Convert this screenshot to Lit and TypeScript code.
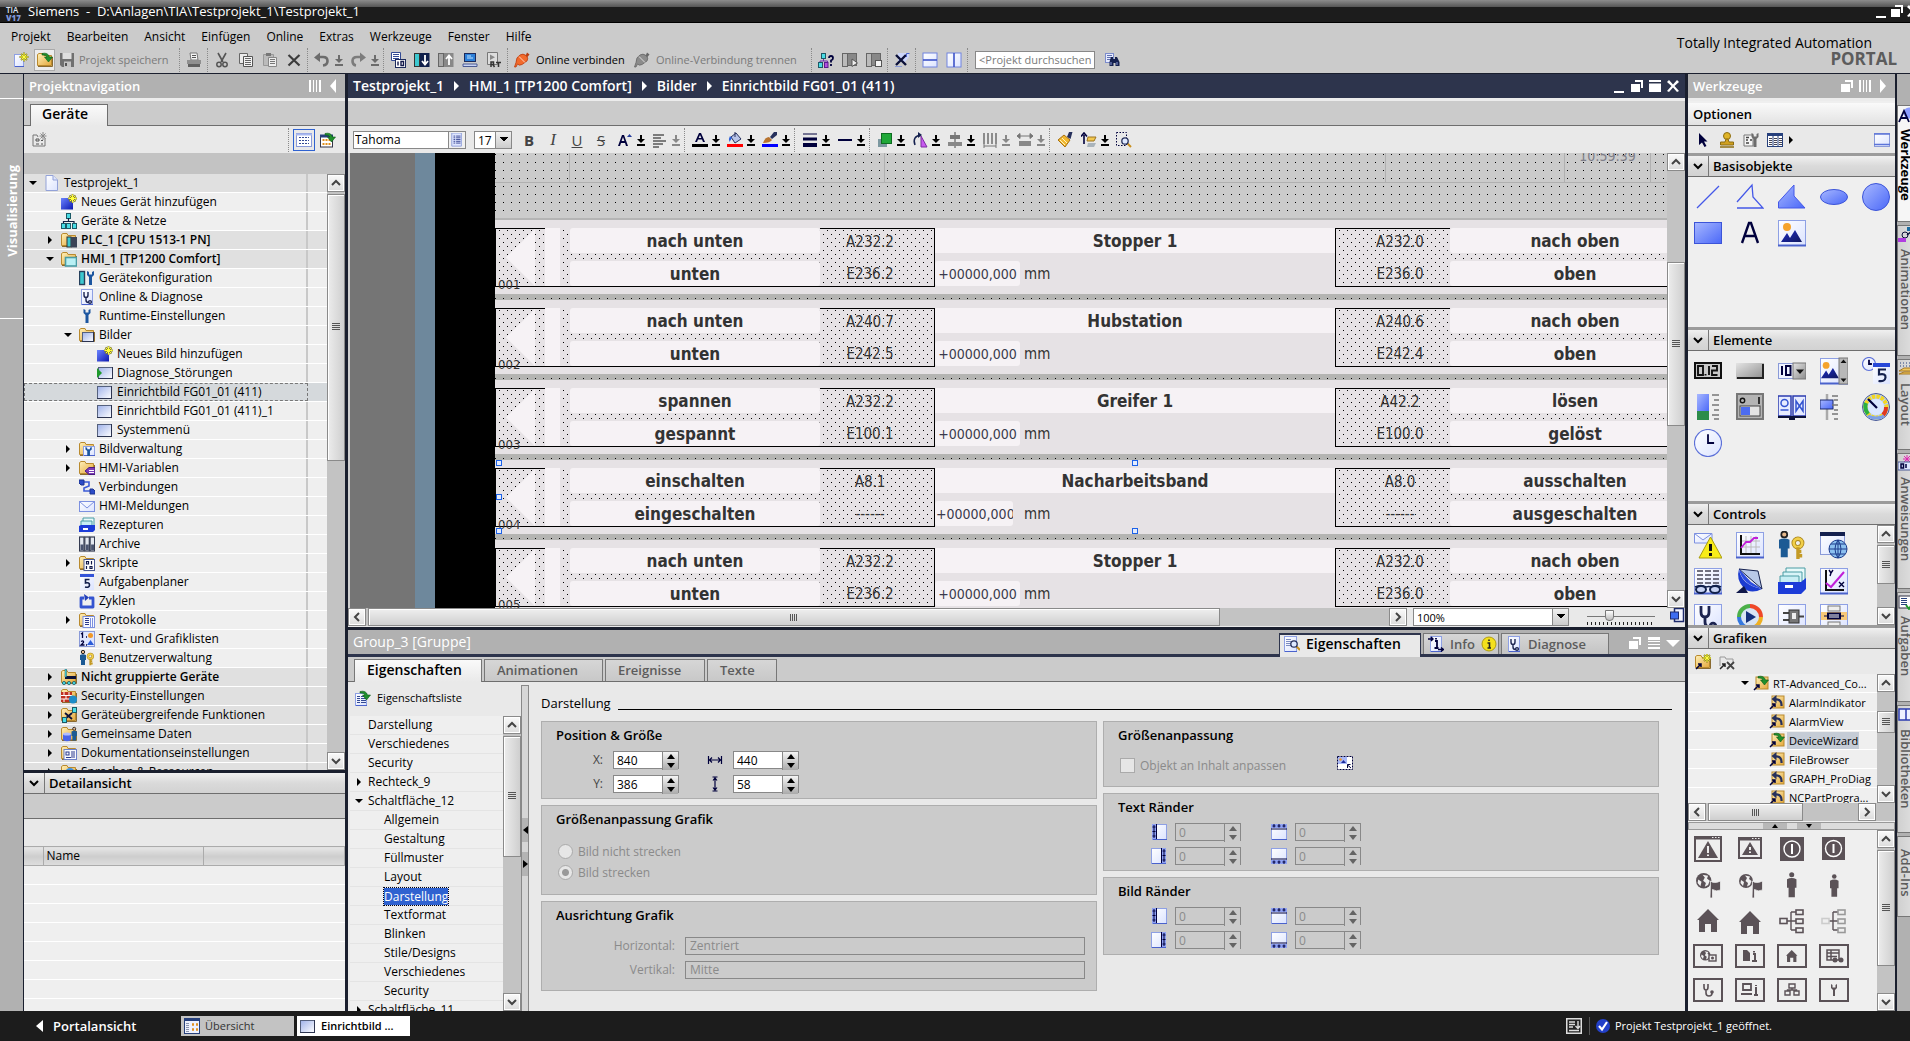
import { LitElement, html, svg, css, nothing } from "lit";
import { customElement } from "lit/decorators.js";
import { classMap } from "lit/directives/class-map.js";
import { styleMap } from "lit/directives/style-map.js";

/* ---------- shared icon parts ---------- */
const star = (x: number, y: number) => svg`<g transform="translate(${x} ${y})"><path d="M0-4.500V4.500M-4.500 0H4.500M-3-3L3 3M3-3L-3 3" stroke="#8a8420" stroke-width="1.800"/><path d="M0-4V4M-4 0H4M-2.500-2.500L2.500 2.500M2.500-2.500L-2.500 2.500" stroke="#ffff3c" stroke-width="1"/></g>`;
const folder = svg`<path d="M.5 13.500V2.500L2 1.500H6L7 3.500H14.500V13.500Z" fill="url(#gf)" stroke="#b98a2e"/><path d="M1 14.500H15.500V5" fill="none" stroke="#8a6a30"/>`;
const page = (x: number, y: number, w: number, h: number) => svg`<rect x=${x + 0.5} y=${y + 0.5} width=${w - 1} height=${h - 1} fill="url(#gp)" stroke="#8ea0e4"/><path d="M${x + 1} ${y + h - 0.5}H${x + w}" stroke="#4a62cc"/>`;
const pic = (x: number, y: number, w: number, h: number) => svg`<rect x=${x + 0.5} y=${y + 0.5} width=${w - 1} height=${h - 1} fill="url(#gq)" stroke="#55617e"/><path d="M${x} ${y + h - 0.5}H${x + w}M${x + w - 0.5} ${y}V${y + h}" stroke="#2c3450"/>`;
const wrench = (x: number, y: number, c: string) => svg`<path transform="translate(${x} ${y})" d="M0 0V4L2 6V14H5V6L7 4V0L5 1V3.500H2V1Z" fill=${c}/>`;
const person = (x: number, y: number, s: number, c: string) => svg`<g transform="translate(${x} ${y}) scale(${s})"><circle cx="3" cy="2" r="1.700" fill="#e8b98c" stroke="#222"/><path d="M0 5Q3 3.500 6 5V10H5V15H1V10H0Z" fill=${c}/></g>`;
const key = (x: number, y: number, s: number) => svg`<g transform="translate(${x} ${y}) scale(${s})"><circle cx="3.500" cy="3.500" r="2.500" fill="none" stroke="#a8841c" stroke-width="2.600"/><circle cx="3.500" cy="3.500" r="2.500" fill="none" stroke="#f1cf4a" stroke-width="1.600"/><path d="M3.500 6V13M3.500 11H6M3.500 8.500H5.500" stroke="#c49a24" stroke-width="2"/></g>`;
const steth = (x: number, y: number, s: number) => svg`<g transform="translate(${x} ${y}) scale(${s})" fill="none" stroke="#1c2450" stroke-width="1.400"><path d="M1 0V3Q1 5.500 3 5.500T5 3V0M3 5.500V8Q3 10.500 5.500 10.500"/><circle cx="7" cy="10" r="1.400"/></g>`;
const bino = svg`<path d="M6 8L7 5H9V7H11V5H13L15.500 10V14H11.500V11H9.500V14H5.500V10Z" fill="#14204e"/><path d="M7 10V13M13 10V13" stroke="#8a9ad8"/>`;
const magn = (x: number, y: number) => svg`<g transform="translate(${x} ${y})"><path d="M3.500 3.500L7 7" stroke="#c98f1e" stroke-width="2"/><circle cx="1" cy="1" r="3.200" fill="#dfe9ff" stroke="#26305c" stroke-width="1.300"/></g>`;
const greenArrow = svg`<path d="M5 1.500Q11 0 12.500 5H15.500L11.500 10L7.500 5H10Q9 2.500 5 3Z" fill="#1f8f2c" stroke="#0d5c18" stroke-width=".6"/>`;
const lines = (x: number, y: number, w: number, n: number, g: number, c: string) => svg`${Array.from({ length: n }, (_, i) => svg`<path d="M${x} ${y + i * g + 0.5}h${w}" stroke=${c}/>`)}`;
const plug = (a: string, b: string) => svg`<path d="M13 .5L15.500 2.500L13 5.500L11.500 4Z" fill=${b}/><path d="M6 3Q9 1 12 3.500T13 9L8 12.500Q5 14 3.500 12L2 15H.5L2 10.500Q2 5 6 3Z" fill=${a} stroke=${b} stroke-width=".8"/><path d="M5 4.500L11 10.500" stroke="#fff" stroke-opacity=".7"/>`;
const dark = "#00003c";
const cyanBox = (x: number, y: number) => svg`<rect x=${x + 0.5} y=${y + 0.5} width="4" height="5" fill="#4adce4" stroke="#1c5a66"/>`;

const I: Record<string, unknown> = {
  newp: svg`${page(1, 2, 10, 13)}${star(11, 5)}`,
  open: svg`${folder}${greenArrow}`,
  save: svg`<path d="M1 1H15V15H3L1 13Z" fill="#707070"/><rect x="3.500" y="1" width="9" height="6" fill="#dedede"/><rect x="5" y="9.500" width="7" height="5.500" fill="#c4c4c4"/><rect x="6" y="11" width="2" height="3" fill="#555"/>`,
  print: svg`<path d="M4 1H11L12 8H5Z" fill="#f4f4f4" stroke="#777"/>${lines(6, 3, 4, 2, 2, "#555")}<path d="M1 8H15V12H1Z" fill="#909090"/><path d="M2 12H14V15H2Z" fill="#606060"/>`,
  cut: svg`<path d="M4 1L9 10M12 1L7 10" stroke="#555" stroke-width="1.600"/><circle cx="5" cy="12.500" r="2.200" fill="none" stroke="#555" stroke-width="1.500"/><circle cx="11" cy="12.500" r="2.200" fill="none" stroke="#555" stroke-width="1.500"/>`,
  copy: svg`<path d="M1.500 1.500H9.500V11.500H1.500Z" fill="#ececec" stroke="#666"/><path d="M5.500 4.500H14.500V14.500H5.500Z" fill="#f4f4f4" stroke="#555"/>${lines(7, 6, 6, 4, 2, "#666")}`,
  paste: svg`<path d="M1.500 2.500H11.500V13.500H1.500Z" fill="#bbb" stroke="#999"/><path d="M4 1H9V4H4Z" fill="#777"/><path d="M6.500 5.500H14.500V14.500H6.500Z" fill="#eee" stroke="#888"/>${lines(8, 7, 5, 3, 2, "#777")}`,
  del: svg`<path d="M2.500 3L13.500 13.500M13.500 3L2.500 13.500" stroke="#3c3c3c" stroke-width="2.200"/>`,
  undo: svg`<path d="M3 5H9Q13.500 5 13.500 9T9 13.500" fill="none" stroke="#6c6c6c" stroke-width="2.600"/><path d="M0 5.500L6 .5V10Z" fill="#6c6c6c"/>`,
  redo: svg`<path d="M12 5H7Q2.500 5 2.500 9T6 13.500" fill="none" stroke="#7c7c7c" stroke-width="2.600"/><path d="M16 5.500L10 .5V10Z" fill="#7c7c7c"/>`,
  comp: svg`<path d="M1.500.5H10.500V8.500H1.500Z" fill="#fff" stroke="#334a94"/>${lines(3, 2, 6, 3, 2, "#334a94")}<rect x="5.500" y="7.500" width="10" height="8" fill="#fff" stroke="#1c2a5c"/><path d="M8 9.500V13.500M11 9.500H13.500V13.500H11Z" stroke="#10184a" fill="none" stroke-width="1.400"/>`,
  down: svg`<rect x=".5" y="1.500" width="5" height="13" fill="#3cc8d0" stroke="#333"/><rect x="6" y="1" width="9.500" height="14" fill="#10204c"/><path d="M11 3V12M8 9L11 12.500L14 9" stroke="#fff" stroke-width="1.800" fill="none"/>`,
  up: svg`<rect x=".5" y="1.500" width="5" height="13" fill="#a8a8a8" stroke="#666"/><rect x="6" y="1" width="9.500" height="14" fill="#888"/><path d="M11 13V4M8 7L11 3.500L14 7" stroke="#fff" stroke-width="1.800" fill="none"/>`,
  pc: svg`<rect x="2.500" y="1.500" width="11" height="8" fill="#2c7fd8" stroke="#1c2a5c"/><path d="M5 4H9M5 6H11" stroke="#bfe4ff"/><path d="M1 12H15V14.500H1Z" fill="#c8d4f4" stroke="#4a5a94"/>`,
  rt: svg`<path d="M1.500.5H11.500V12.500H1.500Z" fill="#ddd" stroke="#777"/><path d="M4 2.500V8L9 5.200Z" fill="#888"/><path d="M5 15V10H7.500V12.500H5M7 12.500L8.500 15M10 10.500H15M12.500 10.500V15" stroke="#333" stroke-width="1.500" fill="none"/>`,
  plug: plug("#f26a2c", "#b93c10"),
  plugoff: plug("#8c8c8c", "#666"),
  net: svg`<g transform="translate(0 1)">${cyanBox(3, 0)}<path d="M5.500 6V8M2 10V8H9.500V10" stroke="#6a2cb0" fill="none"/>${cyanBox(0, 9)}<rect x="6.500" y="9.500" width="3.500" height="5" fill="#b050e0" stroke="#5a1c8c"/></g><path d="M11 6Q11 4 13 4T15 6Q15 8 13 8.500V10.500M13 12V14" stroke="${dark}" stroke-width="1.800" fill="none"/>`,
  start: svg`<rect x=".5" y="1.500" width="5" height="13" fill="#bbb" stroke="#666"/><rect x="5.500" y="1.500" width="9" height="12" fill="#888" stroke="#666"/><path d="M10 7V14.500L15.500 11Z" fill="#eee" stroke="#555"/>`,
  stop: svg`<rect x=".5" y="1.500" width="5" height="13" fill="#bbb" stroke="#666"/><rect x="5.500" y="1.500" width="9" height="12" fill="#888" stroke="#666"/><rect x="9.500" y="8.500" width="6" height="6" fill="#f4f4f4" stroke="#555"/>`,
  xref: svg`<path d="M4 1H15V5L11 10H4Z" fill="#cdd6fa"/><path d="M2 3L12 13M12 3L2 13" stroke="#0b1038" stroke-width="2.400"/><path d="M12.500 5V1.500H15.500" stroke="#4a62cc" fill="none"/><path d="M1 14.500H8" stroke="#8a9ad8"/>`,
  splh: svg`<rect x="1" y="1" width="14" height="14" fill="url(#gp)" stroke="#7084e0"/><path d="M1 8H15" stroke="#3c52c8" stroke-width="1.600"/>`,
  splv: svg`<rect x="1" y="1" width="14" height="14" fill="url(#gp)" stroke="#7084e0"/><path d="M8 1V15" stroke="#3c52c8" stroke-width="1.600"/>`,
  find: svg`<rect x="1.500" y="1.500" width="8" height="9" fill="#e6ebff" stroke="#7c8ccc"/>${lines(3, 3, 5, 3, 2, "#6070b0")}${bino}`,
  /* format bar */
  list: svg`<path d="M2 0H13V15H2Z" fill="#dfe6ff" stroke="#8a9ad8"/>${lines(4, 3, 2, 5, 2, "#2c3a8c")}${lines(7, 3, 5, 5, 2, "#2c3a8c")}`,
  fup: svg`<path d="M1 14L5 3H7L11 14H9L8 11H4L3 14M4.600 9H7.400L6 5Z" fill="${dark}" fill-rule="evenodd"/><path d="M10 5L12.500 2L15 5Z" fill="#243c9c"/>`,
  align: svg`<path d="M1 3H12M1 6H9M1 9H14M1 12H11M1 15H7" stroke="#7c7c7c" stroke-width="2"/>`,
  fcol: svg`<path d="M3 10L7 1H9L13 10H11L10 7.500H6L5 10M6.600 6H9.400L8 3Z" fill="${dark}" fill-rule="evenodd"/><rect x="0" y="12" width="16" height="3" fill="#000"/>`,
  fill: svg`<path d="M4 5L9 1L14 7L8 11Z" fill="#b8c4e8" stroke="#26305c"/><path d="M3 4Q1 7 2.500 10L5 6Z" fill="#2c60d8"/><path d="M8 5V0" stroke="#26305c"/><rect x="0" y="12" width="16" height="3" fill="#f00"/>`,
  pen: svg`<path d="M8 5L12 0H15V3L10 7Z" fill="#26305c"/><path d="M1 11Q3 5 7 5L10 8Q8 11 1 11Z" fill="#b87430"/><rect x="0" y="12" width="16" height="3" fill="#00f"/>`,
  lwid: svg`<path d="M1 2H15" stroke="${dark}"/><path d="M1 7H15" stroke="${dark}" stroke-width="3"/><path d="M1 13H15" stroke="${dark}" stroke-width="4"/>`,
  lsty: svg`<path d="M1 8H15" stroke="${dark}" stroke-width="2"/>`,
  front: svg`<rect x="1" y="7" width="9" height="8" fill="#7c98a0"/><rect x="4.500" y="1.500" width="10" height="10" fill="#1fa838" stroke="#0d6c20"/>`,
  rot: svg`<path d="M9 15V4L15 15Z" fill="#c85af0" stroke="#7c2ca0"/><path d="M3 13Q0 5 8 3" fill="none" stroke="#14204e" stroke-width="1.500"/><path d="M6 0L10 3L6 6Z" fill="#14204e"/>`,
  alv: svg`<path d="M8 0V16" stroke="#444"/><rect x="3" y="3" width="10" height="4" fill="#777"/><rect x="1" y="10" width="14" height="4" fill="#888"/>`,
  dist: svg`<path d="M2 1V12M6 1V12M10 1V12M14 1V12" stroke="#8c8c8c" stroke-width="2"/><path d="M2 14H14M2 12V16M14 12V16" stroke="#777"/>`,
  same: svg`<path d="M3 4H13M3 1.500V6.500L0 4ZM13 1.500V6.500L16 4Z" stroke="#777" fill="#777"/><rect x="2" y="9" width="12" height="5" fill="#888"/>`,
  brush: svg`<path d="M10 5L12 0H15.500L13.500 7Z" fill="#26305c"/><path d="M1 8L7 3L13 8L8 15Z" fill="#f0b830" stroke="#a87010"/><path d="M3 8L8 13M5 6L10 11" stroke="#fff2c0"/>`,
  order: svg`<path d="M3 12V3M0 4.500L3 1L6 4.500" stroke="${dark}" stroke-width="1.600" fill="none"/><path d="M7 5H15L13 9H6Z" fill="#f2c850" stroke="#9c7420"/><path d="M7 11H15L13 15H6Z" fill="#aab4bc"/>`,
  zsel: svg`<rect x=".5" y=".5" width="10" height="13" fill="none" stroke="${dark}" stroke-dasharray="1.500 1.500"/>${magn(8, 8)}`,
  /* tree */
  doc: svg`<path d="M2 .5H9L13.500 5V15.500H2Z" fill="url(#gp)" stroke="#93a2d8"/><path d="M9 .5V5H13.500" fill="#dfe5fb" stroke="#93a2d8"/>`,
  newd: svg`<rect x="0" y="4" width="12" height="11.500" fill="url(#gd)"/>${star(11.5, 4.5)}`,
  netz: svg`${cyanBox(5, 0)}<path d="M7.500 5V9M2.500 10V8.500H13V10" stroke="#102040" stroke-width="1.200" fill="none"/>${cyanBox(0, 10)}${cyanBox(5, 10)}${cyanBox(11, 10)}`,
  fplc: svg`${folder}<rect x="6" y="5" width="4" height="10" fill="#3cc8d0" stroke="#333"/><rect x="10" y="5" width="6" height="10.500" fill="#3c4456"/>`,
  fhmi: svg`${folder}<rect x="4.500" y="6.500" width="11" height="8.500" fill="#b9f0f4" stroke="#4a9ca4" stroke-width="1.600"/>`,
  conf: svg`<rect x=".5" y="1.500" width="5" height="13" fill="#3cc8d0" stroke="#26405c" stroke-width="1.400"/>${wrench(8, 1, "#1c56a0")}`,
  diag: svg`${page(2, 0, 12, 16)}${steth(4, 3, 1)}`,
  wr: wrench(4.5, 1, "#1c56a0"),
  fpic: svg`${folder}${pic(3, 5, 12, 10)}`,
  spic: svg`${pic(1, 2, 15, 12)}<path d="M0 3V13L5 8Z" fill="#1f9a2c"/>`,
  pic: pic(0, 2, 15, 13),
  fmgm: svg`${folder}${page(4, 5, 12, 10)}<g transform="translate(6 6) scale(.9 .65)">${wrench(0.5, 0, "#1c56a0")}</g>`,
  fvar: svg`${folder}<path d="M6 11L10 7.500H16V14.500H10Z" fill="#7c3cb8" stroke="#4a1c80"/><path d="M10 10.500H15M10 12.500H15" stroke="#fff"/>`,
  conn: svg`<path d="M5 3H10V7L5 9V12H11" stroke="#3c5cd8" stroke-width="1.600" fill="none"/><path d="M0 1H5V6H2L0 4ZM11 10H14L16 12V15H11Z" fill="#2c4cc8" stroke="#1c3490"/>`,
  mail: svg`<rect x=".5" y="3.500" width="15" height="10" fill="url(#gp)" stroke="#7c90e0"/><path d="M.5 3.500L8 10L15.500 3.500" fill="none" stroke="#7c90e0"/>`,
  reci: svg`<path d="M4 1H15V9H4Z" fill="#e8fafa" stroke="#4a9ca4"/><path d="M2 4H13V11H2Z" fill="#c8eef4" stroke="#4a9ca4"/><path d="M0 9L2 8H16V13L14 15H0Z" fill="#1c3cd8"/><rect x="4" y="11" width="5" height="2" fill="#fff"/>`,
  arch: svg`${[0, 5.3, 10.6].map((x) => svg`<rect x=${x + 0.5} y="1" width="4.500" height="14" fill="#e4e8f0" stroke="#333a50" stroke-width="1.200"/><path d="M${x + 1.5} 8.500H${x + 4.5}V14H${x + 1.5}Z" fill="#4a5470"/>`)}`,
  fscr: svg`${folder}<rect x="5" y="4.500" width="10.500" height="11" fill="#fff" stroke="#4a5a94"/><path d="M7.500 6.500H9.500V9H7.500ZM12.500 6V9.500M7.500 11V14M11 11.500H13V13.500H11Z" stroke="#10184a" fill="none" stroke-width="1.200"/>`,
  five: svg`<rect x="1" y="0" width="14" height="16" fill="url(#gp)"/><rect x="1" y="0" width="14" height="3" fill="#3454d8"/><path d="M10.500 5.500H6.500V9Q10.500 8 10.500 11T6 13" fill="none" stroke="#14204e" stroke-width="1.600"/>`,
  cyc: svg`<path d="M5 5H2V14H14V5H10" fill="none" stroke="#3454d0" stroke-width="2.800" stroke-linejoin="round"/><path d="M5 1L10 4.500L6 8Z" fill="#2440b8"/>`,
  fprt: svg`${folder}<rect x="4" y="4.500" width="11.500" height="11" fill="#f8faff" stroke="#7c90e0"/>${lines(6, 6, 4, 4, 2, "#2c3a8c")}<path d="M11.500 6V15M13.500 6V15" stroke="#7c90e0"/>`,
  txtl: svg`<rect x=".5" y=".5" width="15" height="15" fill="#dfe6ff" stroke="#8a9ad8"/><path d="M2 3L3.500 2V7M2 10.500Q5 9 4.500 11.500L2 14H5.500M7 6H8M7 14H8" stroke="${dark}" fill="none" stroke-width="1.300"/><circle cx="11.500" cy="4.500" r="2.500" fill="#f09828"/><path d="M8 14L11.500 9L15 14Z" fill="#2c5cd8"/>`,
  user: svg`${person(1, 0, 1, "#1c5a94")}${key(8, 3, 0.95)}`,
  fung: svg`${folder}<rect x="4" y="7" width="11" height="3" fill="#0b1038"/><path d="M4 0H5.500V8H4Z" fill="#4adce4" stroke="#1c5a66" stroke-width=".5"/>${[3, 8, 13].map((x) => svg`<circle cx=${x} cy="14" r="1.600" fill="#4adce4" stroke="#1c5a66" stroke-width=".8"/>`)}`,
  fsec: svg`${folder}<path d="M0 4H11V14H0Z" fill="#c03020"/><path d="M0 7.500H11M0 11H11M3 4V7.500M8 4V7.500M5 7.500V11M3 11V14" stroke="#fff"/><circle cx="12" cy="11.500" r="4" fill="#1c8cc8"/>`,
  fcro: svg`${folder}<path d="M4 6L11 12M11 6L4 12" stroke="#0b1038" stroke-width="1.800"/>${cyanBox(11, 0)}${cyanBox(1, 10)}`,
  fcom: svg`${folder}<path d="M2 8H10V14Q6 16.500 2 14Z" fill="#4a64e8"/><ellipse cx="6" cy="8" rx="4" ry="1.600" fill="#b0bcff"/>${person(10.5, 1, 0.9, "#1c5a94")}`,
  fdoc: svg`${folder}<rect x="3" y="4.500" width="12.500" height="10" fill="#f8faff" stroke="#6c80c8"/><rect x="5" y="7" width="3" height="3" fill="none" stroke="#2c3a8c"/>${lines(5, 12, 5, 1, 2, "#2c3a8c")}<path d="M11 6V13M13 6V13" stroke="#2c3a8c"/>`,
  fglo: svg`${folder}<circle cx="9" cy="9" r="5" fill="#3c90e0"/>`,
  over: svg`<rect x=".5" y=".5" width="15" height="15" fill="#eef2ff" stroke="#26407c"/><rect x="0" y="0" width="16" height="3" fill="#26407c"/>${lines(2, 5, 3, 5, 2, "#8a94b0")}<path d="M8 6.500H10M12 6.500H14M8 11.500H10M12 11.500H14" stroke="#e09020" stroke-width="2.500"/>`,
  tbl: svg`<rect x=".5" y="1.500" width="15" height="13" fill="#fff" stroke="#8a9ad8"/>${[5, 8, 11].map((y) => svg`<path d="M3 ${y + 0.5}H13" stroke="#334a94" stroke-dasharray="2 1"/>`)}<path d="M0 2.500H16" stroke="#a8b8f0" stroke-width="2"/>`,
  cal: svg`<rect x=".5" y="4" width="12" height="11" fill="#fff" stroke="#334"/><rect x="0" y="2.500" width="13" height="3" fill="#26407c"/><path d="M2.500 8H4.500M5.500 8H7.500M8.500 8H10.500M2.500 12H4.500M5.500 12H7.500M8.500 12H10.500" stroke="#e09020" stroke-width="2"/>${greenArrow}`,
  nfol: svg`<path d="M1 5V14H13V6" fill="none" stroke="#777"/><path d="M1 5V3H5L6 5" fill="none" stroke="#777"/><path d="M4 7H7V9H4ZM4 12H7M9 8.500H11M9 12H11" stroke="#555" fill="none"/><path d="M11 0V8M7.500 4H14.500M8.500 1.500L13.500 6.500M13.500 1.500L8.500 6.500" stroke="#888"/>`,
  props: svg`${page(0, 3, 12, 13)}${lines(2, 6, 3, 4, 2, "#334a94")}${lines(6, 6, 5, 4, 2, "#334a94")}${greenArrow}`,
  insp: svg`${page(0, 0, 13, 16)}${lines(2, 3, 5, 4, 2, "#7c8cc0")}${magn(9, 7)}`,
  info: svg`${page(2, 0, 12, 16)}<path d="M7 5H9V12M6.500 12H10.500M8 2V3.500" stroke="${dark}" stroke-width="1.800" fill="none"/><path d="M0 3H5M3 1L5 3L3 5M10 13.500H15M13 11.500L15.500 13.500L13 15.500" stroke="${dark}" stroke-width="1.400" fill="none"/>`,
  infoy: svg`<circle cx="8" cy="8" r="7" fill="#f4e01c" stroke="#b09c10"/><path d="M8 3.500V5M6.500 7H8.500V12M6.500 12H10" stroke="#222" stroke-width="1.600" fill="none"/>`,
  wid: svg`<path d="M1.500 4V12M14.500 4V12M2 8H14M5 5.500L2.500 8L5 10.500M11 5.500L13.500 8L11 10.500" stroke="${dark}" stroke-width="1.200" fill="none"/>`,
  hei: svg`<path d="M5.500 1H10.500M5.500 15H10.500M8 1.500V14.500M6 4.500L8 2L10 4.500M6 11.500L8 14L10 11.500" stroke="${dark}" stroke-width="1.200" fill="none"/>`,
  ml: svg`${page(1, 0, 15, 16)}<rect x="1" y="0" width="4" height="15" fill="#8fa2f4"/><path d="M5.500 0V15M3 1V14M1.500 3H4.500M1.500 7.500H4.500M1.500 12H4.500" stroke="${dark}"/>`,
  mr: svg`${page(0, 0, 15, 16)}<rect x="11" y="0" width="4" height="15" fill="#8fa2f4"/><path d="M10.500 0V15M13 1V14M11.500 3H14.500M11.500 7.500H14.500M11.500 12H14.500" stroke="${dark}"/>`,
  mt: svg`${page(0, 0, 16, 16)}<rect x="0" y="0" width="16" height="4" fill="#8fa2f4"/><path d="M0 5H16M3 0V3.500M8 0V3.500M13 0V3.500M1.500 2H4.500M6.500 2H9.500M11.500 2H14.500" stroke="${dark}"/>`,
  mb: svg`${page(0, 0, 16, 16)}<rect x="0" y="12" width="16" height="4" fill="#8fa2f4"/><path d="M0 11H16M3 12.500V16M8 12.500V16M13 12.500V16M1.500 14H4.500M6.500 14H9.500M11.500 14H14.500" stroke="${dark}"/>`,
  fit: svg`<rect x=".5" y="1.500" width="15" height="13" fill="#fff" stroke="${dark}" stroke-dasharray="2 1"/><rect x="1" y="2" width="9" height="7" fill="#a8b8f8"/><circle cx="3.500" cy="4.500" r="1.300" fill="#f09828"/><path d="M4 8L6.500 5L9 8Z" fill="#1c2a9c"/><path d="M14 13L10.500 10M10.500 13V9.500H13.500" stroke="${dark}" fill="none"/>`,
  ptr: svg`<path d="M4 1L4 13L7 10.500L9.500 15L11.500 14L9 9.500H12.500Z" fill="${dark}"/>`,
  stamp: svg`<circle cx="8" cy="4" r="3.500" fill="#e0b428" stroke="#8c6c10"/><path d="M7 7H9L10 10H14.500V13H1.500V10H6Z" fill="#d0a020" stroke="#8c6c10"/><path d="M1 15H15" stroke="#8c6c10" stroke-width="1.500"/>`,
  optw: svg`<path d="M1 3H10V14H1Z" fill="#f4f4f4" stroke="#777"/><path d="M3 5.500H6M3 8H5M7 8H9M3 11H6" stroke="#444" stroke-width="1.600"/>${wrench(8.5, 1, "#6c6c6c")}`,
  cols: svg`<rect x=".5" y="1.500" width="15" height="13" fill="#fff" stroke="#26407c"/><rect x="0" y="1" width="16" height="3" fill="#26407c"/><path d="M6 4V14M11 4V14" stroke="#26407c"/>${lines(2, 6, 3, 4, 2, "#445")}${lines(7, 6, 3, 4, 2, "#445")}${lines(12, 6, 3, 4, 2, "#445")}`,
  pane: svg`<rect x=".5" y="1.500" width="15" height="13" fill="url(#gp)" stroke="#8a9ad8"/><path d="M0 2H16M0 12.500H16" stroke="#5c74d8" stroke-width="1.600"/>`,
  lfol: svg`${folder}${star(12, 4)}<path d="M1 15L6 10M3 10H6V13" stroke="${dark}" stroke-width="1.500" fill="none"/>`,
  dfol: svg`<path d="M1 12V3H6L7 5H14V8" fill="none" stroke="#999"/><path d="M1 15L6 10M3 10H6V13" stroke="#222" stroke-width="1.500" fill="none"/><path d="M8 8L15 15M15 8L8 15" stroke="#444" stroke-width="1.800"/>`,
  gfol: svg`<rect x="3" y="2" width="12" height="12" fill="url(#gf)" stroke="#b98a2e"/>${greenArrow}<path d="M1 15L6 10M3 10H6V13" stroke="${dark}" stroke-width="1.500" fill="none"/>`,
  bfol: svg`<rect x="3" y="2" width="12" height="12" fill="url(#gf)" stroke="#b98a2e"/><path d="M12.500 12Q13 5 6 5.500" stroke="#26305c" stroke-width="2.200" fill="none"/><path d="M7.500 1V9.500L2.500 5Z" fill="#26305c"/><path d="M1 15L6 10M3 10H6V13" stroke="${dark}" stroke-width="1.500" fill="none"/>`,
  /* tab strip */
  tobj: svg`<circle cx="11" cy="6" r="5.500" fill="#8c9cff"/><path d="M1 15L6 4L11 15M3 11H9" stroke="${dark}" stroke-width="1.800" fill="none"/>`,
  tani: svg`<rect x="9" y="0" width="7" height="4" fill="#1c6ca0"/><circle cx="7" cy="8" r="3" fill="none" stroke="#0b1038"/><path d="M9 8L14 4" stroke="#0b1038" stroke-width="1.500"/><rect x="0" y="11" width="8" height="4" fill="#b03ce0"/>`,
  tlay: svg`<path d="M2 2H16M2 5H16" stroke="#26407c" stroke-dasharray="1 2"/><path d="M1 10L6 7H16L12 10ZM1 13L6 11H16L12 13Z" fill="#f0c860" stroke="#a87820"/>`,
  tanw: svg`<path d="M9 0V8M5 4H13M6 1L12 7M12 1L6 7" stroke="#e028b0"/><rect x="0" y="7" width="16" height="8" fill="#dfe6ff" stroke="#4a5a94"/><path d="M3 9H5.500V13H3ZM8 9V13" stroke="${dark}" fill="none" stroke-width="1.500"/>`,
  tauf: svg`<rect x="1" y="2" width="13" height="12" fill="#fff" stroke="#334"/>${lines(3, 4, 6, 4, 2, "#26407c")}<path d="M8 11L11 15L16 7" stroke="#1f9a2c" stroke-width="2" fill="none"/>`,
  tbib: svg`<path d="M1 2H8V13H1ZM8 2H15V13H8Z" fill="#eef2ff" stroke="#2c3cb0" stroke-width="1.500"/>`,
  okblue: svg`<rect x="1" y="1" width="14" height="14" rx="7" fill="#2340c8"/><path d="M4 8L7 11.500L12 4" stroke="#fff" stroke-width="2.200" fill="none"/>`,
  dock: svg`<path d="M.75.75H15.250V15.250H.75Z" fill="#222" stroke="#ddd" stroke-width="1.500"/><path d="M3 4H9M3 6.500H9M3 9H7M3 12.500H13" stroke="#ddd" stroke-width="1.400"/><path d="M12 3V10M9.500 8L12 10.500L14 8" stroke="#ddd" fill="none" stroke-width="1.400"/>`,
  layer: svg`<rect x="5.500" y=".5" width="9" height="13" fill="#f4f6ff" stroke="#1c2a6c" stroke-width="1.500"/><rect x="1.500" y="4" width="8" height="7" fill="#3c6cf0" stroke="#1c2a6c"/>`,
};

/* 28px palette icons */
const bframe = svg`<rect x=".5" y="1.500" width="27" height="25" fill="url(#gp)" stroke="#8ea0e4"/><path d="M0 26.500H28" stroke="#4a62cc" stroke-width="2"/>`;
const clock = (cx: number, cy: number, r: number) => svg`<circle cx=${cx} cy=${cy} r=${r} fill="url(#gp)" stroke="#5c70d8" stroke-width="1.200"/><path d="M${cx} ${cy - r * 0.65}V${cy}H${cx + r * 0.45}" fill="none" stroke="${dark}" stroke-width="1.800"/>`;
const mount = (x: number, y: number, s: number) => svg`<g transform="translate(${x} ${y}) scale(${s})"><circle cx="6" cy="4" r="4" fill="#f5a32c"/><path d="M0 19L6 10L9 15L14 7L21 19Z" fill="url(#gm)"/></g>`;
const grey = "#5b5257";
const globe = (x: number, y: number, s: number) => svg`<g transform="translate(${x} ${y}) scale(${s})"><circle cx="7" cy="7" r="7" fill=${grey}/><path d="M2 6L5 8L4 12L1.500 9ZM6 1.500L8 4L6.500 7L9 9L8 12.500L11 11L12.500 7L10 5L11 2.500Z" fill="#efefef"/></g>`;
const flag = svg`<path d="M16.500 10Q20 13 26.500 10V19Q22 21 18.500 18.500V27H16Z" fill=${grey} stroke="#efefef" stroke-width=".8"/>`;
const house = (x: number, y: number, s: number) => svg`<path transform="translate(${x} ${y}) scale(${s})" d="M11 0L22 11H20V23H14V15H8V23H2V11H0Z" fill=${grey}/>`;
const man = (x: number, y: number, s: number) => svg`<g transform="translate(${x} ${y}) scale(${s})" fill=${grey}><circle cx="4.500" cy="2.600" r="2.400"/><path d="M0 7Q4.500 4.500 9 7V15H7.500V24H1.500V15H0Z"/></g>`;
const frameS = svg`<rect x="1" y="1" width="28" height="22" fill="#eee" stroke=${grey} stroke-width="2"/>`;
const power = (a: number) => svg`<rect x="2" y="2" width=${a} height=${a} fill=${grey}/><circle cx=${2 + a / 2} cy=${2 + a / 2} r="8" fill="none" stroke="#fff" stroke-width="1.400"/><path d="M${2 + a / 2} 9V${a - 5}" stroke="#fff" stroke-width="2"/>`;
const warn = (w: number, o: number) => svg`<g transform="translate(${o} ${o / 2})"><rect x="1" y="2" width=${w} height=${w - 2} fill="#eee" stroke=${grey} stroke-width="2"/><path d="M0 3H${w + 2}" stroke=${grey} stroke-width="3"/><path d="M${w - 8} 2.500H${w}" stroke="#eee" stroke-dasharray="1.500 1.500"/><path d="M${w / 2 + 1} 6L${w - 2} ${w - 3}H4Z" fill=${grey}/><path d="M${w / 2 + 1} 11V${w - 8}M${w / 2 + 1} ${w - 6.5}V${w - 5}" stroke="#eee" stroke-width="2"/></g>`;
const tree3 = (a: string) => svg`<path d="M9 14H13M13 5V23M13 5H18M13 14H18M13 23H18" stroke=${grey} fill="none" stroke-width="1.400"/><rect x="2" y="11.500" width="7" height="5" fill="none" stroke=${a} stroke-width="1.600"/>${[3, 12, 21].map((y) => svg`<rect x="18" y=${y} width="7" height="4.500" fill="none" stroke=${a === grey ? grey : "#999"} stroke-width="1.600"/>`)}`;

const B: Record<string, unknown> = {
  Linie: svg`<path d="M3 25L25 3" stroke="#4458e8" stroke-width="1.300"/>`,
  Polylinie: svg`<path d="M1 19L16 2L17 14L27 25H1" fill="none" stroke="#4458e8" stroke-width="1.300"/>`,
  Polygon: svg`<path d="M.5 25V19L16 2V13L27 25Z" fill="url(#gb)" stroke="#4458e8"/>`,
  Ellipse: svg`<ellipse cx="14" cy="14" rx="13.500" ry="7.500" fill="url(#gb)" stroke="#3c54d8"/>`,
  Kreis: svg`<circle cx="14" cy="14" r="13.500" fill="url(#gb)" stroke="#3c54d8"/>`,
  Rechteck: svg`<rect x=".5" y="3.500" width="27" height="21" fill="url(#gb)" stroke="#3c54d8"/>`,
  Textfeld: svg`<path d="M6 24L13 4H15L22 24M9 17H19" fill="none" stroke="${dark}" stroke-width="2.400"/>`,
  Grafikanzeige: svg`${bframe}${mount(3, 4, 1)}`,
  "EA-Feld": svg`<rect x="1" y="6" width="26" height="15" fill="#c8c8c8" stroke="#111" stroke-width="2"/><path d="M4 9H9V18H4ZM11.500 17V18.500M15 9V18M18 9H23V13.500H18V18H23.500" fill="none" stroke="#111" stroke-width="1.900"/>`,
  Schaltfläche: svg`<rect x="0" y="6" width="28" height="16" fill="url(#gg)"/><path d="M1 21H27V7" fill="none" stroke="#222" stroke-width="2"/>`,
  "Symbolisches EA-Feld": svg`<rect x=".5" y="6.500" width="27" height="15" fill="#eef2ff" stroke="#8a9ad8"/><path d="M4 9V18M8 9H12.500V18H8Z" fill="none" stroke="${dark}" stroke-width="2"/><rect x="15" y="6" width="13" height="16" fill="url(#gg)" stroke="#777"/><path d="M18 12.500H26L22 17Z" fill="#111"/>`,
  "Grafisches EA-Feld": svg`${bframe}${mount(1, 5, 0.85)}<rect x="19" y="1" width="9" height="26" fill="#b8b8b8" stroke="#777"/><path d="M20.500 6H26.500L23.500 2.500ZM20.500 21.500H26.500L23.500 25Z" fill="#111"/>`,
  "Datum/Uhrzeit": svg`${clock(7, 7, 6.5)}<rect x="11" y="6" width="17" height="21" fill="url(#gp)"/><rect x="11" y="6" width="17" height="4" fill="#2848d8"/><path d="M24 12.500H17V17.500Q24 16 23.500 20.500T16.500 24" fill="none" stroke="#14204e" stroke-width="2.200"/>`,
  Balken: svg`<rect x="3" y="1" width="12" height="18" fill="url(#gb)"/><rect x="3" y="18" width="12" height="9" fill="#2c8c4a"/><path d="M18 2H25M20 7H25M18 12H25M20 17H25M18 22H25M20 26H25" stroke="#777" stroke-width="1.300"/>`,
  Schalter: svg`<rect x="1" y="1" width="26" height="25" fill="#b4b4b4" stroke="#777" stroke-width="2"/><circle cx="6.500" cy="7.500" r="2.200" fill="none" stroke="#111" stroke-width="1.400"/><path d="M23 4V11" stroke="#111" stroke-width="1.600"/><rect x="4" y="13" width="20" height="10" fill="#e4e4e4" stroke="#444"/><rect x="5" y="14" width="9" height="8" fill="#4c6cf0"/>`,
  Symbolbibliothek: svg`<path d="M0 3H13V23H0ZM15 3H28V23H15Z" fill="#e6ebff" stroke="#2c3cb0" stroke-width="1.500"/><path d="M0 24H28M11 26H17" stroke="#0b1038" stroke-width="2"/><circle cx="6.500" cy="10" r="3.500" fill="none" stroke="#3454d0" stroke-width="1.500"/><path d="M2.500 17H10.500M18 8L25 18V8L18 18Z" fill="none" stroke="#3454d0" stroke-width="1.500"/>`,
  Schieberegler: svg`<path d="M7 1V27" stroke="#aaa" stroke-width="2.500"/><rect x="0" y="7" width="13" height="9" fill="url(#gb)" stroke="#1c2a6c"/><path d="M12 3H18M14 7H18M12 12H18M14 17H18M12 21H18M14 26H18" stroke="#777" stroke-width="1.300"/>`,
  Zeigerinstrument: svg`<circle cx="14" cy="14" r="13.500" fill="#b8d0ff" stroke="#4a5a94"/><circle cx="14" cy="14" r="10.500" fill="none" stroke="#f4d820" stroke-width="4" stroke-dasharray="3.500 1"/><path d="M4 10Q2 16 6 21" stroke="#2cb040" stroke-width="4" fill="none"/><path d="M24 14Q24 19 21 22" stroke="#e03820" stroke-width="4" fill="none"/><circle cx="14" cy="14" r="8" fill="#dbe7ff"/><path d="M6 23Q14 27 22 23" stroke="#7ca0e8" stroke-width="3" fill="none"/><path d="M6 6L15 15" stroke="${dark}" stroke-width="2.200"/>`,
  Uhr: clock(14, 14, 13.5),
  Meldeanzeige: svg`<path d="M.5 2.500H18V12H.5Z" fill="url(#gp)" stroke="#7c90e0"/><path d="M.5 2.500L9 9L18 2.500" fill="none" stroke="#7c90e0"/><path d="M16.500 6L28 27H5Z" fill="#f8ec18" stroke="#a89c10"/><path d="M16.500 13V20M16.500 22V25" stroke="#111" stroke-width="3"/>`,
  Kurvenanzeige: svg`${bframe}<path d="M5 4V23H24" fill="none" stroke="#111" stroke-width="2"/><path d="M10 5V22M15 5V22M20 5V22M6 10H24M6 16H24" stroke="#bbb"/><path d="M5 17L10 11H14L18 7H22" fill="none" stroke="#c020d8" stroke-width="1.800"/>`,
  Benutzeranzeige: svg`${person(1, 0, 1.75, "#1c5a94")}${key(14, 6, 1.7)}`,
  "HTML-Browser": svg`<rect x=".5" y="1.500" width="24" height="22" fill="url(#gp)" stroke="#8a9ad8"/><rect x="0" y="1" width="25" height="4" fill="#14204e"/><circle cx="18" cy="18" r="9" fill="#8cc0f0" stroke="#1c3c8c"/><path d="M9 18H27M18 9V27M11 13H25M11 23H25M18 9Q12 18 18 27M18 9Q24 18 18 27" fill="none" stroke="#1c3c8c"/>`,
  Beobachtungstabelle: svg`${bframe}${[4, 8, 12, 16].map((y) => svg`<path d="M3 ${y}H25" stroke="#445" stroke-width="1.400" stroke-dasharray="6 2"/>`)}<path d="M1 20Q7 17 12 20Q15 19 17 20Q22 17 27 20" stroke="#10204c" fill="none" stroke-width="1.500"/><ellipse cx="7" cy="22.500" rx="5" ry="3.500" fill="#c8d4f4" stroke="#10204c" stroke-width="2"/><ellipse cx="21" cy="22.500" rx="5" ry="3.500" fill="#c8d4f4" stroke="#10204c" stroke-width="2"/>`,
  "Sm@rtClient": svg`<path d="M3 2Q5 18 26 22Q14 28 7 20T3 2Z" fill="#1c3cd0"/><path d="M3 2L26 22L22 4Z" fill="#b8c8e8" stroke="#14204e"/><path d="M3 2Q6 18 26 22L15 15Z" fill="#2c4ce0"/><path d="M0 26L8 19L12 26Z" fill="#10184a"/>`,
  Rezepturanzeige: svg`<path d="M8 1H27V14H8Z" fill="#e8fafa" stroke="#4a9ca4"/><path d="M5 5H24V17H5Z" fill="#d8f4f8" stroke="#4a9ca4"/><path d="M2 9H21V20H2Z" fill="#c8eef4" stroke="#4a9ca4"/><path d="M0 15H23L28 11V22L23 27H0Z" fill="#1c3cd8"/><rect x="7" y="18" width="8" height="3" fill="#fff"/>`,
  "f(x)-Kurvenanzeige": svg`${bframe}<path d="M6 3V23H24" fill="none" stroke="#111" stroke-width="2"/><path d="M6 16L11 20L24 5" fill="none" stroke="#c020d8" stroke-width="2"/><path d="M9 3L11 6L13 3M11 6L10 9M19 15L24 20M24 15L19 20" stroke="${dark}" stroke-width="1.400" fill="none"/>`,
  Systemdiagnose: svg`${bframe}${steth(5, 3, 2)}`,
  "Media Player": svg`<circle cx="14" cy="14" r="13" fill="#d8e4f4"/><path d="M14 3A11 11 0 0 1 25 14" stroke="#f04828" stroke-width="4" fill="none"/><path d="M25 14A11 11 0 0 1 14 25" stroke="#f0b020" stroke-width="4" fill="none"/><path d="M14 25A11 11 0 0 1 3 14" stroke="#3478e0" stroke-width="4" fill="none"/><path d="M3 14A11 11 0 0 1 14 3" stroke="#4cb048" stroke-width="4" fill="none"/><path d="M10 8V20L20 14Z" fill="#14307c"/>`,
  "PLC-Codeanzeige": svg`${bframe}<path d="M5 10H12M5 17H12M20 13.500H26" stroke="#444" stroke-width="2"/><rect x="11" y="7" width="10" height="13" fill="#777" stroke="#333"/><rect x="14" y="10" width="4" height="6" fill="#eee"/>`,
  "GRAPH-Übersicht": svg`${bframe}<rect x="1" y="9" width="26" height="8" fill="#f8c878"/><rect x="8" y="3" width="12" height="5" fill="#eee" stroke="#777"/><rect x="8" y="10.500" width="12" height="5" fill="#fff" stroke="${dark}" stroke-width="2"/><rect x="8" y="19" width="12" height="5" fill="#eee" stroke="#777"/><path d="M4 13H24" stroke="${dark}"/>`,
};
const G: unknown[] = [
  warn(26, 0), warn(22, 2), power(24), power(23),
  svg`${globe(2, 2, 1.1)}${flag}`, svg`${globe(3, 3, 1)}${flag}`,
  man(9, 1, 1.05), man(10, 3, 0.95), house(3, 2, 1), house(3, 4, 1), tree3(grey), tree3("#ccc"),
];
const F: unknown[] = [
  svg`${globe(7, 6, 0.75)}<rect x="16" y="11" width="7" height="6" fill="#eee" stroke=${grey} stroke-width="1.400"/><circle cx="19.500" cy="14" r="1.500" fill=${grey}/>`,
  svg`<path d="M8 6H12L15 9V17H8Z" fill=${grey}/><path d="M18 10H20V17M17 17H22M19 7V8.500" stroke=${grey} stroke-width="2" fill="none"/>`,
  house(9, 6, 0.52),
  svg`<path d="M8 6H20V16H8ZM8 9H20M8 12.500H18M12 6V16" fill="none" stroke=${grey} stroke-width="1.500"/><circle cx="16" cy="16" r="2.500" fill=${grey}/><circle cx="22" cy="16" r="2.500" fill=${grey}/>`,
  svg`<path d="M11 6V9Q11 12 13 12T15 9V6M13 12V15Q13 18 16 18T19 15" fill="none" stroke=${grey} stroke-width="1.600"/><circle cx="19" cy="14" r="1.800" fill=${grey}/>`,
  svg`<path d="M8 6H16V12H8ZM6 16H17" fill="none" stroke=${grey} stroke-width="1.800"/><path d="M20 10H21V17M19 17H23M21 7V8" stroke=${grey} stroke-width="2" fill="none"/>`,
  svg`<path d="M12 6H18V10H12ZM8 13H13V17H8ZM17 13H22V17H17ZM15 10V12M10.500 13V12H19.500V13" fill="none" stroke=${grey} stroke-width="1.400"/>`,
  svg`<path d="M12 6V10L14 12V18H16V12L18 10V6L16.500 7V9.500H13.500V7Z" fill=${grey}/>`,
];

const ic = (n: string, cls = "ic") => html`<svg class=${cls} viewBox="0 0 16 16" aria-hidden="true">${I[n]}</svg>`;
const tb = (n: string, label: string, cls = "tb") => html`<button class=${cls} aria-label=${label} title=${label}>${ic(n)}</button>`;
const drop = (off = false) => html`<button class=${classMap({ drop: true, off })} aria-label="Auswahl öffnen"><svg viewBox="0 0 10 14"><path d="M4 2H6V6H9L5 10L1 6H4ZM1 11H9V13H1Z" fill="currentColor"/></svg></button>`;
const sep = html`<span class="sep"></span>`;
const chev = (d: string) => html`<svg class="chev" viewBox="0 0 10 10" aria-hidden="true"><path d=${d} fill="none" stroke="currentColor" stroke-width="2"/></svg>`;
const UP = "M1 7L5 3L9 7", DN = "M1 3L5 7L9 3", LF = "M7 1L3 5L7 9", RG = "M3 1L7 5L3 9";
const bar = (dir: "v" | "h", before: number, thumb: number, after: number) => html`
  <div class="sb ${dir}">
    <button class="sbb" aria-label="Zurück">${chev(dir === "v" ? UP : LF)}</button>
    <span style=${styleMap({ flex: `${before} 0 0` })}></span>
    <span class="thumb" style=${styleMap({ flex: `${thumb} 0 0` })}><i></i></span>
    <span style=${styleMap({ flex: `${after} 0 0` })}></span>
    <button class="sbb" aria-label="Weiter">${chev(dir === "v" ? DN : RG)}</button>
  </div>`;
const tri = (open: boolean | null) => html`<span class="tri">${open === null ? nothing : html`<svg viewBox="0 0 10 10" aria-hidden="true"><path d=${open ? "M1 3H9L5 7Z" : "M3 1V9L7 5Z"} fill="#000"/></svg>`}</span>`;

type Node = [number, boolean | null, string, string, string?];
const TREE: Node[] = [
  [0, true, "doc", "Testprojekt_1", "g"], [1, null, "newd", "Neues Gerät hinzufügen"], [1, null, "netz", "Geräte & Netze"],
  [1, false, "fplc", "PLC_1 [CPU 1513-1 PN]", "g b"], [1, true, "fhmi", "HMI_1 [TP1200 Comfort]", "g b"],
  [2, null, "conf", "Gerätekonfiguration"], [2, null, "diag", "Online & Diagnose"], [2, null, "wr", "Runtime-Einstellungen"],
  [2, true, "fpic", "Bilder"], [3, null, "newd", "Neues Bild hinzufügen"], [3, null, "spic", "Diagnose_Störungen"],
  [3, null, "pic", "Einrichtbild FG01_01 (411)", "sel"], [3, null, "pic", "Einrichtbild FG01_01 (411)_1"], [3, null, "pic", "Systemmenü"],
  [2, false, "fmgm", "Bildverwaltung"], [2, false, "fvar", "HMI-Variablen"], [2, null, "conn", "Verbindungen"],
  [2, null, "mail", "HMI-Meldungen"], [2, null, "reci", "Rezepturen"], [2, null, "arch", "Archive"], [2, false, "fscr", "Skripte"],
  [2, null, "five", "Aufgabenplaner"], [2, null, "cyc", "Zyklen"], [2, false, "fprt", "Protokolle"],
  [2, null, "txtl", "Text- und Grafiklisten"], [2, null, "user", "Benutzerverwaltung"],
  [1, false, "fung", "Nicht gruppierte Geräte", "g b"], [1, false, "fsec", "Security-Einstellungen", "g"],
  [1, false, "fcro", "Geräteübergreifende Funktionen", "g"], [1, false, "fcom", "Gemeinsame Daten", "g"],
  [1, false, "fdoc", "Dokumentationseinstellungen", "g"], [1, false, "fglo", "Sprachen & Ressourcen", "g"],
];
const PROPS: [number, boolean | null, string][] = [
  [0, null, "Darstellung"], [0, null, "Verschiedenes"], [0, null, "Security"], [0, false, "Rechteck_9"], [0, true, "Schaltfläche_12"],
  [1, null, "Allgemein"], [1, null, "Gestaltung"], [1, null, "Füllmuster"], [1, null, "Layout"], [1, null, "Darstellung"],
  [1, null, "Textformat"], [1, null, "Blinken"], [1, null, "Stile/Designs"], [1, null, "Verschiedenes"], [1, null, "Security"], [0, false, "Schaltfläche_11"],
];
const ROWS = [
  ["001", "nach unten", "unten", "A232.2", "E236.2", "Stopper 1", "A232.0", "E236.0", "nach oben", "oben"],
  ["002", "nach unten", "unten", "A240.7", "E242.5", "Hubstation", "A240.6", "E242.4", "nach oben", "oben"],
  ["003", "spannen", "gespannt", "A232.2", "E100.1", "Greifer 1", "A42.2", "E100.0", "lösen", "gelöst"],
  ["004", "einschalten", "eingeschalten", "A8.1", "------", "Nacharbeitsband", "A8.0", "------", "ausschalten", "ausgeschalten"],
  ["005", "nach unten", "unten", "A232.2", "E236.2", "Stopper 1", "A232.0", "E236.0", "nach oben", "oben"],
];
const GTREE: [string, string][] = [["bfol", "AlarmIndikator"], ["bfol", "AlarmView"], ["gfol", "DeviceWizard"], ["bfol", "FileBrowser"], ["bfol", "GRAPH_ProDiag"], ["bfol", "NCPartProgra..."]];

@customElement("app-root")
export class AppRoot extends LitElement {
  static styles = css`
    :host { display: grid; grid-template-rows: auto minmax(0, 1fr) auto; height: 100vh; min-height: 760px; overflow: hidden;
      font: 12px/18px "Open Sans", "Noto Sans", sans-serif; color: #000; background: #1a1f2e; }
    *, *::before, *::after { box-sizing: border-box; }
    button, input, select { font: inherit; color: inherit; margin: 0; padding: 0; border: 0; border-radius: 0; background: none; }
    h1, h2, h3, ul, p { margin: 0; padding: 0; font: inherit; list-style: none; }
    svg { display: block; }
    .defs { position: absolute; width: 0; height: 0; }
    .ic { width: 16px; height: 16px; flex: none; }
    .grow { flex: 1; min-width: 0; }

    .title { display: flex; align-items: center; height: 23px; color: #fff; font-size: 13px; line-height: 16px; white-space: pre; padding-left: 6px;
      background: linear-gradient(#8c8c8c, #555 7px, #1c1c1c 7px); border-bottom: 1px solid #000; overflow: hidden; }
    .title .wins { display: flex; gap: 2px; margin-right: -10px; }
    .title svg { width: 14px; height: 14px; }
    .badge { font-size: 8px; line-height: 8px; font-weight: 600; width: 22px; color: #dfe6f4; padding-top: 6px; }
    .badge b { display: block; color: #7f96d8; }
    .top { display: flex; background: #cbcbcb; height: 50px; }
    .menu { display: flex; gap: 16px; padding: 5px 0 0 11px; height: 26px; }
    .menu a { color: #000; text-decoration: none; }
    .tools { display: flex; align-items: center; padding-left: 9px; height: 24px; margin-top: -1px; }
    .tb { display: flex; align-items: center; justify-content: center; width: 24px; height: 22px; flex: none; }
    .tb.boxed { background: #ececec; border: 1px solid #aaa; width: 21px; margin: 0 2px 0 1px; }
    .tb.sm { width: 20px; }
    .tb.fm { width: 23px; }
    .lbl { font-size: 11px; text-align: left; white-space: nowrap; padding-left: 2px; }
    .lbl.dis { color: #7a7a7a; }
    .w1 { width: 101px; } .w2 { width: 96px; } .w3 { width: 156px; }
    .sep { width: 4px; height: 24px; flex: none; border-left: 1px dotted #8a8a8a; margin-left: 1px; margin-right: -1px; }
    .drop { width: 12px; height: 20px; flex: none; display: flex; align-items: center; }
    .drop svg { width: 10px; height: 14px; }
    .drop.off { color: #888; }
    .tools .drop { color: #6c6c6c; }
    .search { width: 120px; height: 18px; border: 1px solid #888; background: #fff; padding: 0 3px; margin: 0 5px 0 5px; font-size: 11px; }
    .search::placeholder { color: #7a7a7a; opacity: 1; }
    .brand { margin-left: auto; padding: 12px 13px 0 0; text-align: right; font-size: 14px; line-height: 16px; font-weight: 500; white-space: nowrap; }
    .brand span { padding-right: 25px; display: block; }
    .brand b { display: block; font-size: 17px; color: #5c5c5c; }

    .main { display: grid; grid-template-columns: 23px 322px minmax(0, 1fr) 208px 14px; min-height: 0; padding-top: 1px; }
    .left { background: #b1b1b1; display: flex; flex-direction: column; }
    .left div { height: 221px; margin-top: 24px; border-top: 1px solid #fff; border-bottom: 1px solid #fff; display: flex; align-items: center; justify-content: center; padding-top: 4px; }
    .left span { writing-mode: vertical-rl; rotate: 180deg; color: #fff; font-weight: 700; font-size: 13px; }
    .col { display: flex; flex-direction: column; min-width: 0; min-height: 0; overflow: hidden; }
    .nav { margin-left: 1px; }
    .mid { margin: 0 3px; }
    .head { display: flex; align-items: center; height: 24px; flex: none; padding: 0 5px; gap: 6px; background: #b1b1b1; color: #fff; font-size: 13px; font-weight: 600; white-space: nowrap; }
    .head.blue { background: #2d344c; gap: 10px; font-size: 14px; }
    .head svg.w { width: 14px; height: 14px; }
    .head .wins { display: flex; gap: 4px; }
    .rule { height: 3px; flex: none; background: #ececec; }
    .tabrow { height: 25px; flex: none; display: flex; align-items: flex-end; background: #cbcbcb; border-bottom: 1px solid #6e6e6e; }
    .nav .tab { margin: 0 0 -1px 6px; height: 22px; width: 78px; padding: 0 0 3px 11px; text-align: left; line-height: 18px; border: 1px solid #6e6e6e; border-bottom: 0; background: linear-gradient(#fafafa, #e9e9e9); font-size: 14px; font-weight: 600; }
    .strip { height: 27px; flex: none; display: flex; align-items: center; background: #e9e9e9; }
    .nav .strip { padding: 0 5px 0 4px; }
    .tb.on { border: 1px solid #2f62d0; width: 22px; margin: 0 1px 0 2px; }
    .gap { height: 21px; flex: none; background: #c3c3c3; }
    .body { flex: 1; min-height: 0; display: flex; background: #c3c3c3; overflow: hidden; }
    .tree { flex: 1; overflow: hidden; min-width: 0; background: #efefef; }
    .row { display: grid; grid-template-columns: minmax(0, 1fr) 19px; height: 19px; border-bottom: 1px solid #fff; background: #efefef; }
    .row > span { display: flex; align-items: center; gap: 4px; border-right: 2px solid #c8c8c8; white-space: nowrap; height: 18px; }
    .row.g { background: #e0e0e0; }
    .row.b { font-weight: 600; }
    .row.sel { background: #d5d9dc; }
    .row.sel > span { border: 1px dashed #777; padding-right: 0; }
    .row.l0 > span { padding-left: 2px; } .row.l1 > span { padding-left: 19px; } .row.l2 > span { padding-left: 37px; } .row.l3 > span { padding-left: 55px; }
    .row.sel.l3 > span { padding-left: 54px; }
    .tri { width: 14px; height: 10px; flex: none; padding-left: 2px; }
    .tri svg { width: 10px; height: 10px; }
    .sb { display: flex; flex: none; background: #c3c3c3; color: #444; }
    .sb.v { flex-direction: column; width: 18px; gap: 1px; }
    .sb.h { height: 18px; gap: 1px; }
    .sbb { width: 18px; height: 18px; flex: none; display: flex; align-items: center; justify-content: center; border: 1px solid #8a8a8a; background: linear-gradient(#fafafa, #dcdcdc); box-shadow: inset 0 0 0 1px #fff; }
    .chev { width: 10px; height: 10px; }
    .thumb { border: 1px solid #8a8a8a; box-shadow: inset 1px 1px 0 #fff; display: flex; align-items: center; justify-content: center; min-width: 0; min-height: 0; }
    .v .thumb { background: linear-gradient(90deg, #ececec, #cfcfcf); } .h .thumb { background: linear-gradient(#efefef, #cfcfcf); }
    .v .thumb i { width: 8px; height: 8px; background: repeating-linear-gradient(#555 0 1px, transparent 1px 2px); }
    .h .thumb i { width: 8px; height: 7px; background: repeating-linear-gradient(90deg, #555 0 1px, transparent 1px 2px); }

    .sect { display: flex; align-items: center; height: 21px; flex: none; border-bottom: 1px solid #6e6e6e; background: linear-gradient(#f0f0f0, #dadada 50%, #d2d2d2); font-size: 13px; font-weight: 600; }
    .sect button { width: 21px; height: 20px; border-right: 1px solid #777; margin-right: 4px; display: grid; place-items: center; }
    .sect svg { width: 10px; height: 10px; }
    .detail { height: 238px; flex: none; margin-top: 3px; display: flex; flex-direction: column; background: #efefef; overflow: hidden; }
    .detail .g1 { height: 25px; flex: none; background: #cbcbcb; border-bottom: 1px solid #6e6e6e; }
    .detail .g2 { height: 27px; flex: none; background: #e9e9e9; }
    table { border-collapse: collapse; width: 100%; table-layout: fixed; }
    th { height: 19px; padding: 0 3px; text-align: left; font-weight: 400; font-size: 12px; line-height: 16px; background: linear-gradient(#e6e6e6, #cdcdcd 50%, #dedede); border: 1px solid #ababab; border-left: 0; }
    th.c1 { width: 19px; } th.c2 { width: 160px; }
    td { height: 19px; padding: 0; border-bottom: 1px solid #fff; }

    .fbar { padding-left: 5px; }
    .combo { display: flex; height: 18px; border: 1px solid #888; background: #fff; flex: none; }
    .combo input { width: 94px; padding: 0 1px; min-width: 0; }
    .combo button { width: 17px; border-left: 1px solid #888; background: #f0f0f0; display: grid; place-items: center; }
    .combo button svg { width: 14px; height: 14px; }
    .pick { position: relative; display: flex; height: 18px; flex: none; border: 1px solid #888; background: #fff; }
    .pick select { appearance: none; width: 100%; padding: 0 3px; outline: 0; }
    .pick::after { content: ""; position: absolute; right: 0; top: 0; bottom: 0; width: 16px; border-left: 1px solid #888; pointer-events: none;
      background: conic-gradient(from -45deg at 50% 60%, #000 25%, transparent 0) center 5px / 8px 8px no-repeat, linear-gradient(#f0f0f0, #ccc); }
    .size { width: 38px; margin: 0 5px 0 8px; }
    .fmt { width: 24px; height: 22px; flex: none; font-size: 15px; color: #444; line-height: 20px; text-align: center; }
    .fmt.s1 { font-weight: 700; } .fmt.s2 { font-style: italic; font-family: "Liberation Serif", serif; font-size: 17px; } .fmt.s3 { text-decoration: underline; } .fmt.s4 { text-decoration: line-through; }
    .fbar .sep { width: 5px; }

    .stage { flex: 1; min-height: 0; display: flex; overflow: hidden; border-left: 2px solid #d0d0d0; }
    .pad1 { width: 65px; background: #757575; flex: none; } .pad2 { width: 20px; background: #6e889c; flex: none; } .pad3 { width: 60px; background: #000; flex: none; }
    .screen { flex: 1; min-width: 0; overflow: hidden; font-family: "DejaVu Sans Condensed", "DejaVu Sans", sans-serif; font-size: 15px; color: #333; position: relative;
      background: conic-gradient(from 0deg at 1px 1px, transparent 75%, #000 0) 0 1px / 8px 8px, #cbcbcb; }
    .cells { height: 30px; border-bottom: 1px solid #b0b0b0; display: flex; width: 1205px; }
    .cells span { border-right: 1px solid #b0b0b0; flex: none; }
    .k1 { width: 75px; } .k2 { width: 315px; } .k3 { width: 501px; } .k4 { width: 179px; } .k5 { width: 86px; font-size: 14px; line-height: 18px; color: #7e7e88; text-align: center; margin-top: -6px; }
    .free { height: 37px; border-bottom: 2px solid #b4b4b4; }
    .band { height: 74px; width: 1205px; background: #e6e2e5; padding-top: 8px; position: relative; }
    .under { height: 6px; width: 1205px; background: conic-gradient(from 0deg at 1px 1px, transparent 75%, #000 0) 0 4px / 8px 8px, #b4b4b2; }
    .unit { display: grid; grid-template-columns: 50px 15px 10px 250px 115px 400px 115px 250px; height: 59px;
      background: conic-gradient(from 0deg at 1px 1px, transparent 75%, #000 0) 4px 2px / 8px 8px, conic-gradient(from 0deg at 1px 1px, transparent 75%, #000 0) 0 6px / 8px 8px, #e6e2e5;
      border-bottom: 1px solid #000; }
    .arrow { border-left: 1px solid #000; border-top: 1px solid #000; position: relative; }
    .arrow svg { width: 49px; height: 57px; }
    .no { position: absolute; left: 2px; bottom: -7px; font-size: 13px; line-height: 16px; }
    .lit { background: #f6f2f5; }
    .pair { display: flex; flex-direction: column; justify-content: space-between; font-size: 17px; font-weight: 700; text-align: center; line-height: 26px; }
    .pair span { height: 25px; background: #f6f2f5; border-radius: 3px; }
    .addr { display: flex; flex-direction: column; justify-content: space-between; text-align: center; line-height: 26px; border-top: 1px solid #000; }
    .addr span { height: 25px; }
    .addr.a { border-right: 1px solid #000; padding-right: 14px; } .addr.z { border-left: 1px solid #000; padding-left: 14px; }
    .name { background: #e6e2e5; margin-bottom: -1px; display: flex; flex-direction: column; justify-content: space-between; }
    .name b { height: 25px; background: #f6f2f5; text-align: center; font-size: 17px; line-height: 26px; }
    .name p { height: 26px; display: flex; gap: 4px; line-height: 26px; }
    .name p span { width: 85px; height: 25px; background: #f6f2f5; border-radius: 3px; font-size: 14px; text-align: center; color: #3a3a4c; }
    .name p.cut span { width: 78px; margin-right: 7px; overflow: hidden; text-align: left; padding-left: 1px; }
    .grip { position: absolute; width: 6px; height: 6px; border: 1px solid #1c62e8; background: #e4ecff; }
    .g-a { left: 1px; top: 0; } .g-b { left: 637px; top: 0; } .g-c { left: 1px; top: 34px; } .g-d { left: 1px; top: 68px; } .g-e { left: 637px; top: 68px; }

    .foot { display: flex; height: 19px; flex: none; background: #e9e9e9; }
    .foot .sb { flex: 1; }
    .zoom { width: 156px; margin: 0 18px 0 6px; font-size: 11px; }
    .slide { position: relative; width: 68px; margin-right: 14px; height: 18px; }
    .slide input { appearance: none; width: 100%; height: 18px; background: repeating-linear-gradient(90deg, #222 0 1px, transparent 1px 4px) 0 14px / 100% 3px no-repeat, linear-gradient(#777, #777) 0 8px / 100% 1px no-repeat; }
    .slide input::-webkit-slider-thumb { appearance: none; width: 9px; height: 11px; background: linear-gradient(#fff, #bbb); border: 1px solid #777; border-radius: 0 0 4px 4px; margin-top: -3px; }

    .insp { height: 381px; margin-top: 3px; flex: none; display: flex; flex-direction: column; background: #e9e9e9; overflow: hidden; }
    .ihead { display: flex; height: 27px; flex: none; align-items: flex-end; background: #b1b1b1; border-bottom: 3px solid #2d344c; color: #fff; padding: 0 5px; font-size: 13px; font-weight: 600; }
    .ihead h2 { flex: 1; line-height: 24px; font-size: 14px; font-weight: 500; }
    .it { display: flex; align-items: center; gap: 6px; height: 21px; border: 1px solid #777; border-bottom: 0; background: linear-gradient(#d6d6d6, #c4c4c4); color: #5c5c5c; padding-left: 4px; margin-right: 2px; }
    .it.on2 { background: #e9e9e9; color: #000; height: 24px; margin-bottom: -3px; border-color: #2d344c; border-top-width: 2px; width: 142px; font-size: 14px; padding-bottom: 4px; }
    .t2 { width: 76px; } .t3 { width: 108px; }
    .ihead .wins { display: flex; gap: 5px; height: 22px; width: 69px; justify-content: flex-end; align-items: center; }
    .ihead .wins svg { width: 14px; height: 14px; }
    .itabs { display: flex; align-items: flex-end; gap: 2px; height: 25px; flex: none; background: #cbcbcb; border-bottom: 1px solid #6e6e6e; padding-left: 6px; }
    .itabs button { height: 22px; border: 1px solid #777; border-bottom: 0; background: linear-gradient(#d6d6d6, #c8c8c8); color: #5c5c5c; font-size: 13px; font-weight: 600; text-align: left; padding: 0 0 2px 12px; line-height: 18px; }
    .itabs button.cur { margin-bottom: -1px; height: 23px; background: linear-gradient(#fafafa, #e9e9e9); color: #000; font-size: 14px; padding-bottom: 3px; }
    .e1 { width: 128px; } .e2 { width: 119px; } .e3 { width: 100px; } .e4 { width: 70px; }
    .ibody { flex: 1; min-height: 0; display: grid; grid-template-columns: 173px 8px minmax(0, 1fr); }
    .plist { display: flex; flex-direction: column; min-height: 0; padding-left: 2px; }
    .pl { display: flex; align-items: center; gap: 6px; height: 34px; flex: none; padding: 0 0 2px 5px; font-size: 11px; }
    .pitems { flex: 1; min-height: 0; overflow: hidden; }
    .pitem { display: flex; align-items: center; height: 19px; background: #efefef; border-bottom: 1px solid #e4e4e4; padding-left: 4px; }
    .pitem .tri { padding-left: 0; }
    .pitem.in { padding-left: 20px; }
    .pitem.cur b { background: #2f62d0; color: #fff; outline: 1px dotted #001; line-height: 17px; font-weight: 400; }
    .pitem b { font-weight: 400; }
    .split { margin-top: 3px; border: 1px solid #888; border-bottom: 0; background: #d6d6d6; display: flex; flex-direction: column; align-items: center; padding-top: 132px; gap: 10px; }
    .split span { height: 24px; width: 6px; background: #b4b4b4; display: grid; place-items: center; }
    .split svg { width: 5px; height: 8px; }
    .form { padding: 12px 26px 0 12px; min-width: 0; }
    .legend { display: flex; gap: 7px; height: 20px; font-size: 13px; margin-right: -13px; }
    .legend::after { content: ""; flex: 1; height: 1px; background: #000; margin-top: 15px; }
    .groups { display: grid; grid-template-columns: minmax(0, 1fr) minmax(0, 1fr); gap: 6px; padding-top: 7px; align-items: start; }
    .gc { display: flex; flex-direction: column; gap: 6px; }
    .grp { border: 1px solid #aeaeae; background: #cbcbcb; padding: 3px 11px 0 14px; color: #444; }
    .grp h3 { font-size: 13px; font-weight: 600; color: #000; height: 26px; line-height: 20px; }
    .ga { height: 78px; } .gb { height: 90px; } .gd { height: 66px; }
    .fields { display: grid; grid-template-columns: 57px 66px 54px 66px; row-gap: 6px; align-items: center; }
    .fields label { text-align: right; padding-right: 10px; }
    .fields > svg { justify-self: end; margin-right: 10px; }
    .fields.mar { padding-left: 33px; column-gap: 8px; grid-template-columns: 16px 88px 16px 66px; }
    .fields.mar > svg { margin-right: 0; }
    .spin { display: grid; grid-template-columns: minmax(0, 1fr) 16px; width: 66px; height: 18px; border: 1px solid #888; background: #fff; }
    .spin input { padding: 0 3px; color: #000; width: 100%; }
    .spin > span { display: grid; border-left: 1px solid #888; background: linear-gradient(#f4f4f4, #aaa); }
    .spin button { height: 8px; display: grid; place-items: center; }
    .spin svg { width: 8px; height: 5px; }
    .off .spin, .off .spin > span { background: #cbcbcb; } .off .spin input { color: #8a8a8a; } .off .spin svg { opacity: .5; }
    .opt { display: flex; align-items: center; gap: 5px; height: 21px; color: #8a8a8a; padding-left: 2px; }
    .opt input { appearance: none; width: 15px; height: 15px; border: 1px solid #aaa; background: #e6e6e6; }
    .opt input[type="radio"] { border-radius: 50%; }
    .opt input[type="radio"]:checked { background: radial-gradient(#999 0 3px, #e6e6e6 4px); }
    .opts { padding-top: 6px; }
    .sel2 { display: grid; grid-template-columns: 129px minmax(0, 1fr); row-gap: 6px; color: #8a8a8a; align-items: center; padding-top: 6px; }
    .sel2 label { text-align: right; padding-right: 10px; }
    .sel2 input { height: 18px; border: 1px solid #888; padding: 0 4px; color: #8a8a8a; }
    .chk { display: flex; padding: 4px 0 0 2px; }
    .chk .opt { width: 217px; padding: 0; }

    .opth { height: 23px; margin-top: 2px; flex: none; padding-left: 5px; font-size: 13px; font-weight: 600; line-height: 22px; background: linear-gradient(#fafafa, #e2e2e2); border-bottom: 1px solid #6e6e6e; }
    .right .strip { padding: 0 3px; }
    .right { background: #efefef; margin-right: 1px; }
    .more { width: 12px; height: 14px; }
    .more svg { width: 8px; height: 8px; }
    .sect.t { border-top: 3px solid #9b9b9b; height: 24px; }
    .pal { display: grid; grid-template-columns: repeat(5, 42px); grid-auto-rows: 36px; align-content: start; flex: none; overflow: hidden; background: #efefef; }
    .pal button { display: grid; place-items: center; padding-right: 2px; }
    .big { width: 28px; height: 28px; }
    .pa { height: 150px; padding-top: 2px; }
    .flex { display: flex; flex: none; overflow: hidden; }
    .pc { flex: 1; padding-top: 2px; height: 100px; grid-template-columns: repeat(4, 42px); }
    .gtools { height: 25px; padding-left: 3px; }
    .gtree { height: 129px; background: #c3c3c3; }
    .gitem { display: flex; align-items: center; gap: 2px; height: 19px; border-bottom: 1px solid #fff; padding-left: 81px; white-space: nowrap; background: #efefef; font-size: 11px; font-weight: 500; }
    .gitem.top1 { padding-left: 50px; }
    .gitem .tri { width: 13px; }
    .gitem.cur b { background: #c5ccd6; }
    .gitem b { font-weight: 500; padding: 0 1px 0 2px; line-height: 17px; }
    .cor { width: 19px; background: #c3c3c3; }
    .gsplit { height: 8px; flex: none; background: #dcdcdc; border: 1px solid #999; display: flex; justify-content: center; gap: 10px; margin-top: 1px; }
    .gsplit span { width: 24px; background: #b8b8b8; display: grid; place-items: center; }
    .gsplit svg { width: 6px; height: 4px; }
    .gfx { flex: 1; min-height: 0; display: flex; }
    .gg { flex: 1; display: grid; grid-template-columns: repeat(4, 42px); grid-template-rows: 36px 36px 36px 33px 36px; align-content: start; padding-top: 1px; overflow: hidden; }
    .gg button { display: grid; place-items: center; padding-right: 2px; }
    .frm { width: 30px; height: 24px; }
    .tabs { background: #b1b1b1; margin-left: 1px; padding-top: 31px; gap: 3px; }
    .vt { display: flex; flex-direction: column; align-items: flex-start; gap: 6px; border: 1px solid #777; border-right: 0; background: linear-gradient(90deg, #d0d0d0, #e2e2e2); color: #5c5c5c; overflow: hidden; width: 20px; flex: none; font-size: 13px; font-weight: 600; padding-top: 1px; }
    .vt.cur { background: #f6f6f6; color: #000; font-weight: 700; }
    .vt span { writing-mode: vertical-rl; width: 16px; line-height: 16px; }
    .v1 { height: 117px; } .v2 { height: 131px; } .v3 { height: 91px; } .v4 { height: 136px; } .v5 { height: 110px; } .v6 { height: 128px; } .v7 { height: 81px; padding-top: 12px; }

    .status { display: flex; align-items: center; height: 30px; background: #1c1c1c; color: #fff; padding: 0 14px 0 36px; }
    .portal { display: flex; align-items: center; gap: 10px; width: 145px; font-size: 13px; font-weight: 600; }
    .portal svg { width: 7px; height: 12px; }
    .task { display: flex; align-items: center; gap: 5px; width: 113px; height: 20px; margin-right: 3px; background: #c3c3c3; color: #333; padding-left: 3px; font-size: 11px; }
    .task.cur { background: #fff; color: #000; font-weight: 600; }
    .msg { display: flex; align-items: center; gap: 4px; width: 307px; font-size: 11px; border-left: 1px solid #555; padding-left: 5px; margin-left: 7px; }
  `;

  private win(kind: string) {
    const p: Record<string, string> = {
      min: "M2 12H12V14H2Z", rest: "M5 1H13V9H11V3H5ZM1 5H10V13H1Z", max: "M1 1H13V3H1ZM1 4.500H13V13H1Z",
      close: "M1 3L3 1L7 5.500L11 1L13 3L8.500 7L13 12L11 13L7 8.500L3 13L1 12L5.500 7Z",
      left: "M10 0V14L4 7Z", right: "M4 0V14L10 7Z", cols: "M1 1H3V13H1ZM5 1H6V13H5ZM8 1H9V13H8ZM11 1H13V13H11Z",
      rows: "M1 1H13V4H1ZM1 5H13V6H1ZM1 8H13V9H1ZM1 11H13V13H1Z", down: "M0 4H14L7 11Z",
    };
    return html`<button aria-label=${kind}><svg class="w" viewBox="0 0 14 14"><path d=${p[kind]} fill="#fff"/></svg></button>`;
  }

  private spin(id: string, v: string, off = false) {
    return html`<div class="spin"><input id=${id} aria-label=${id} .value=${v} ?disabled=${off}><span>
      <button aria-label="Erhöhen" ?disabled=${off}><svg viewBox="0 0 8 5"><path d="M0 5H8L4 0Z"/></svg></button>
      <button aria-label="Verringern" ?disabled=${off}><svg viewBox="0 0 8 5"><path d="M0 0H8L4 5Z"/></svg></button></span></div>`;
  }

  private header() {
    return html`<header>
      <div class="title"><span class="badge">TIA<b>V17</b></span><span class="grow">Siemens  -  D:\\Anlagen\\TIA\\Testprojekt_1\\Testprojekt_1</span><span class="wins">${this.win("min")}${this.win("rest")}${this.win("close")}</span></div>
      <div class="top"><div>
        <nav class="menu">${["Projekt", "Bearbeiten", "Ansicht", "Einfügen", "Online", "Extras", "Werkzeuge", "Fenster", "Hilfe"].map((m) => html`<a href="#">${m}</a>`)}</nav>
        <div class="tools">
          ${tb("newp", "Neues Projekt")}${tb("open", "Projekt öffnen", "tb boxed")}${tb("save", "Speichern", "tb sm")}<button class="lbl dis w1">Projekt speichern</button>
          ${sep}${tb("print", "Drucken")}${sep}${tb("cut", "Ausschneiden")}${tb("copy", "Kopieren")}${tb("paste", "Einfügen")}${tb("del", "Löschen")}
          ${sep}${tb("undo", "Rückgängig")}${drop(true)}${tb("redo", "Wiederholen")}${drop(true)}
          ${sep}${tb("comp", "Übersetzen")}${tb("down", "Laden in Gerät")}${tb("up", "Laden aus Gerät")}${tb("pc", "Simulation")}${tb("rt", "Runtime")}
          ${sep}${tb("plug", "Online")}<button class="lbl w2">Online verbinden</button>${tb("plugoff", "Offline")}<button class="lbl dis w3">Online-Verbindung trennen</button>
          ${sep}${tb("net", "Erreichbare Teilnehmer")}${tb("start", "Start")}${tb("stop", "Stopp")}${sep}${tb("xref", "Querverweise")}
          ${sep}${tb("splh", "Horizontal teilen")}${tb("splv", "Vertikal teilen")}${sep}
          <input class="search" aria-label="Projekt durchsuchen" placeholder="&lt;Projekt durchsuchen&gt;">${tb("find", "Suchen")}
        </div></div>
        <div class="brand"><span>Totally Integrated Automation</span><b>PORTAL</b></div>
      </div></header>`;
  }

  private nav() {
    return html`<section class="col nav">
      <div class="head"><h2 class="grow">Projektnavigation</h2><span class="wins">${this.win("cols")}${this.win("left")}</span></div>
      <div class="rule"></div><div class="tabrow"><button class="tab">Geräte</button></div>
      <div class="strip">${tb("nfol", "Neue Gruppe")}<span class="grow"></span>${sep}${tb("tbl", "Übersicht", "tb on")}${tb("cal", "Detailansicht öffnen")}</div>
      <div class="gap"></div>
      <div class="body"><div class="tree" role="tree">${TREE.map(([l, o, i, t, c]) => html`<div class="row l${l} ${c ?? ""}" role="treeitem"><span>${tri(o)}${ic(i)}${t}</span></div>`)}</div>${bar("v", 0, 265, 290)}</div>
      <section class="detail"><div class="sect"><button aria-label="Zuklappen">${chev(DN)}</button><h2>Detailansicht</h2></div><div class="g1"></div><div class="g2"></div>
        <table><thead><tr><th class="c1"></th><th class="c2">Name</th><th></th></tr></thead><tbody>${Array.from({ length: 9 }, () => html`<tr><td></td><td></td><td></td></tr>`)}</tbody></table></section>
    </section>`;
  }

  private unit(r: string[], i: number) {
    return html`<div class="band"><div class="unit">
        <div class="arrow"><svg viewBox="0 0 49 57" aria-hidden="true"><path d="M10 28.500L39 0V57Z" fill="#f6f2f5"/></svg><span class="no">${r[0]}</span></div>
        <div class="lit"></div><div></div>
        <div class="pair"><span>${r[1]}</span><span>${r[2]}</span></div>
        <div class="addr a"><span>${r[3]}</span><span>${r[4]}</span></div>
        <div class="name"><b>${r[5]}</b><p class=${i === 3 ? "cut" : ""}><span>+00000,000</span>mm</p></div>
        <div class="addr z"><span>${r[6]}</span><span>${r[7]}</span></div>
        <div class="pair"><span>${r[8]}</span><span>${r[9]}</span></div>
      </div>${i === 3 ? ["a", "b", "c", "d", "e"].map((g) => html`<i class="grip g-${g}"></i>`) : nothing}</div><div class="under"></div>`;
  }

  private editor() {
    const crumbs = ["Testprojekt_1", "HMI_1 [TP1200 Comfort]", "Bilder", "Einrichtbild FG01_01 (411)"];
    const arrow = html`<svg viewBox="0 0 5 10" width="5" height="10"><path d="M0 0V10L5 5Z" fill="#fff"/></svg>`;
    return html`<main class="col mid">
      <div class="head blue">${crumbs.map((c, i) => html`${i ? arrow : nothing}<span>${c}</span>`)}<span class="grow"></span><span class="wins">${this.win("min")}${this.win("rest")}${this.win("max")}${this.win("close")}</span></div>
      <div class="rule"></div><div class="tabrow"></div>
      <div class="strip fbar">
        <span class="combo"><input aria-label="Schriftart" .value=${"Tahoma"}><button aria-label="Schriftliste">${ic("list")}</button></span>
        <span class="pick size"><select aria-label="Schriftgröße"><option>17</option></select></span>
        <button class="fmt s1">B</button><button class="fmt s2">I</button><button class="fmt s3">U</button><button class="fmt s4">S</button>
        ${tb("fup", "Schriftgröße", "tb fm")}${drop()}${tb("align", "Ausrichtung", "tb fm")}${drop(true)}${sep}
        ${tb("fcol", "Schriftfarbe", "tb fm")}${drop()}${tb("fill", "Hintergrund", "tb fm")}${drop()}${tb("pen", "Rahmenfarbe", "tb fm")}${drop()}${sep}
        ${tb("lwid", "Linienstärke", "tb fm")}${drop()}${tb("lsty", "Linienart", "tb fm")}${drop()}${sep}
        ${tb("front", "Reihenfolge", "tb fm")}${drop()}${tb("rot", "Drehen", "tb fm")}${drop()}${tb("alv", "Ausrichten", "tb fm")}${drop()}${tb("dist", "Verteilen", "tb fm")}${drop(true)}${tb("same", "Größe", "tb fm")}${drop(true)}${sep}
        ${tb("brush", "Format übertragen")}${tb("order", "Ebene", "tb fm")}${drop()}${tb("zsel", "Auswahl zoomen", "tb fm")}
      </div>
      <div class="stage"><div class="pad1"></div><div class="pad2"></div><div class="pad3"></div>
        <div class="screen"><div class="cells"><span class="k1"></span><span class="k2"></span><span class="k3"></span><span class="k4"></span><span class="k5">10:59:39</span></div><div class="free"></div>
          ${ROWS.map((r, i) => this.unit(r, i))}</div>
        ${bar("v", 90, 165, 165)}</div>
      <div class="foot">${bar("h", 0, 855, 168)}<span class="pick zoom"><select aria-label="Zoom"><option>100%</option></select></span>
        <span class="slide"><input type="range" aria-label="Zoomregler" min="0" max="100" .value=${"30"}></span>${ic("layer")}</div>
      ${this.inspector()}
    </main>`;
  }

  private margins(p: string) {
    return html`<div class="fields mar off">${ic("ml")}${this.spin(`${p} links`, "0", true)}${ic("mt")}${this.spin(`${p} oben`, "0", true)}
      ${ic("mr")}${this.spin(`${p} rechts`, "0", true)}${ic("mb")}${this.spin(`${p} unten`, "0", true)}</div>`;
  }

  private inspector() {
    return html`<section class="insp">
      <div class="ihead"><h2>Group_3 [Gruppe]</h2><button class="it on2">${ic("insp")}Eigenschaften</button><button class="it t2">${ic("info")}Info${ic("infoy")}</button><button class="it t3">${ic("diag")}Diagnose</button>
        <span class="wins">${this.win("rest")}${this.win("rows")}${this.win("down")}</span></div>
      <div class="itabs"><button class="cur e1">Eigenschaften</button><button class="e2">Animationen</button><button class="e3">Ereignisse</button><button class="e4">Texte</button></div>
      <div class="ibody">
        <div class="plist"><button class="pl">${ic("props")}Eigenschaftsliste</button>
          <div class="body"><div class="pitems" role="tree">${PROPS.map(([l, o, t], i) => html`<div class=${classMap({ pitem: true, in: l === 1, cur: i === 9 })} role="treeitem">${tri(o)}<b>${t}</b></div>`)}</div>${bar("v", 0, 120, 136)}</div></div>
        <div class="split"><span><svg viewBox="0 0 5 8"><path d="M5 0V8L0 4Z"/></svg></span><span><svg viewBox="0 0 5 8"><path d="M0 0V8L5 4Z"/></svg></span></div>
        <div class="form"><h2 class="legend">Darstellung</h2>
          <div class="groups"><div class="gc">
            <section class="grp ga"><h3>Position &amp; Größe</h3><div class="fields"><label for="X">X:</label>${this.spin("X", "840")}${ic("wid")}${this.spin("Breite", "440")}<label for="Y">Y:</label>${this.spin("Y", "386")}${ic("hei")}${this.spin("Höhe", "58")}</div></section>
            <section class="grp gb"><h3>Größenanpassung Grafik</h3><div class="opts"><label class="opt"><input type="radio" name="s" disabled>Bild nicht strecken</label><label class="opt"><input type="radio" name="s" checked disabled>Bild strecken</label></div></section>
            <section class="grp gb"><h3>Ausrichtung Grafik</h3><div class="sel2"><label for="hz">Horizontal:</label><input id="hz" disabled .value=${"Zentriert"}><label for="vt">Vertikal:</label><input id="vt" disabled .value=${"Mitte"}></div></section>
          </div><div class="gc">
            <section class="grp gd"><h3>Größenanpassung</h3><div class="chk"><label class="opt"><input type="checkbox" disabled>Objekt an Inhalt anpassen</label>${ic("fit")}</div></section>
            <section class="grp ga"><h3>Text Ränder</h3>${this.margins("Text")}</section>
            <section class="grp ga"><h3>Bild Ränder</h3>${this.margins("Bild")}</section>
          </div></div></div>
      </div></section>`;
  }

  private pal(from: number, to: number, cls: string) {
    return html`<div class="pal ${cls}">${Object.entries(B).slice(from, to).map(([n, g]) => html`<button aria-label=${n} title=${n}><svg class="big" viewBox="0 0 28 28">${g}</svg></button>`)}</div>`;
  }

  private right() {
    const sect = (t: string) => html`<div class="sect t"><button aria-label="Zuklappen">${chev(DN)}</button><h2>${t}</h2></div>`;
    return html`<aside class="col right">
      <div class="head"><h2 class="grow">Werkzeuge</h2><span class="wins">${this.win("rest")}${this.win("cols")}${this.win("right")}</span></div>
      <div class="rule"></div><h2 class="opth">Optionen</h2>
      <div class="strip">${tb("ptr", "Zeiger")}${tb("stamp", "Stempel")}${tb("optw", "Einstellungen")}${tb("cols", "Spalten")}<button class="more" aria-label="Mehr"><svg viewBox="0 0 8 8"><path d="M2 0V8L6 4Z"/></svg></button><span class="grow"></span>${tb("pane", "Fenster", "tb sm")}</div>
      ${sect("Basisobjekte")}${this.pal(0, 8, "pa")}
      ${sect("Elemente")}${this.pal(8, 19, "pa")}
      ${sect("Controls")}<div class="flex">${this.pal(19, 31, "pc")}${bar("v", 0, 40, 22)}</div>
      ${sect("Grafiken")}<div class="strip gtools">${tb("lfol", "Verknüpfung anlegen")}${tb("dfol", "Verknüpfung löschen")}</div>
      <div class="flex gtree"><div class="grow" role="tree"><div class="gitem top1">${tri(true)}${ic("gfol")}<b>RT-Advanced_Co...</b></div>
        ${GTREE.map(([i, t], n) => html`<div class=${classMap({ gitem: true, cur: n === 2 })}>${ic(i)}<b>${t}</b></div>`)}</div>${bar("v", 18, 20, 52)}</div>
      <div class="flex"><div class="grow">${bar("h", 0, 95, 54)}</div><span class="cor"></span></div>
      <div class="gsplit"><span><svg viewBox="0 0 6 4"><path d="M0 4H6L3 0Z"/></svg></span><span><svg viewBox="0 0 6 4"><path d="M0 0H6L3 4Z"/></svg></span></div>
      <div class="gfx"><div class="gg">${G.map((g, n) => html`<button aria-label="Grafik ${n + 1}"><svg class="big" viewBox="0 0 28 28">${g}</svg></button>`)}${F.map((g, n) => html`<button aria-label="Grafik ${n + 13}"><svg class="frm" viewBox="0 0 30 24">${frameS}${g}</svg></button>`)}</div>${bar("v", 0, 118, 26)}</div>
    </aside>`;
  }

  render() {
    const tabs = [["tobj", "Werkzeuge"], ["tani", "Animationen"], ["tlay", "Layout"], ["tanw", "Anweisungen"], ["tauf", "Aufgaben"], ["tbib", "Bibliotheken"], ["", "Add-Ins"]];
    const lg = (id: string, a: string, b: string) => svg`<linearGradient id=${id} x1="0" y1="0" x2="1" y2="1"><stop offset="0" stop-color=${a}/><stop offset="1" stop-color=${b}/></linearGradient>`;
    return html`<svg class="defs"><defs>${lg("gf", "#fff0b8", "#e4a83c")}${lg("gp", "#ffffff", "#dbe3ff")}${lg("gq", "#9fb2ea", "#ffffff")}${lg("gd", "#6c84ff", "#0c18b0")}${lg("gb", "#a8b8ff", "#4a68f8")}${lg("gg", "#e4e4e4", "#8c8c8c")}${lg("gm", "#1c2cc8", "#10185c")}</defs></svg>
      ${this.header()}
      <div class="main">
        <div class="left"><div><span>Visualisierung</span></div></div>
        ${this.nav()}${this.editor()}${this.right()}
        <nav class="col tabs">${tabs.map(([i, t], n) => html`<button class="vt v${n + 1} ${n ? "" : "cur"}">${i ? ic(i) : nothing}<span>${t}</span></button>`)}</nav>
      </div>
      <footer class="status"><button class="portal"><svg viewBox="0 0 7 12"><path d="M7 0V12L0 6Z" fill="#fff"/></svg>Portalansicht</button>
        <button class="task">${ic("over")}Übersicht</button><button class="task cur">${ic("pic")}Einrichtbild ...</button><span class="grow"></span>${ic("dock")}<span class="msg">${ic("okblue")}Projekt Testprojekt_1 geöffnet.</span></footer>`;
  }
}
